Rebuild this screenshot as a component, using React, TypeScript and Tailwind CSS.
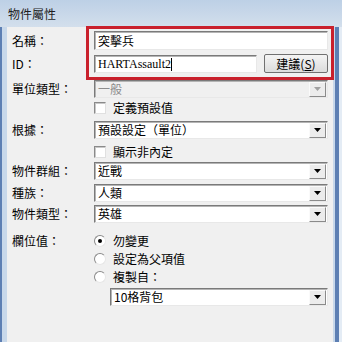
import React from "react";

const font = { fontFamily: '"Noto Sans CJK TC", "Noto Sans", sans-serif' };

function Field({ children, disabled }: { children?: React.ReactNode; disabled?: boolean }) {
  return (
    <div
      className={`flex items-center w-full h-full border border-t-[#7a7a7a] border-l-[#7a7a7a] border-b-[#e8e8e8] border-r-[#e8e8e8] shadow-[inset_1px_1px_0_#b4b4b4] pl-[3px] ${
        disabled ? "bg-[#f0f0f0] text-[#8d8d8d]" : "bg-white text-black"
      }`}
    >
      {children}
    </div>
  );
}

function Combo({ text, disabled }: { text: string; disabled?: boolean }) {
  return (
    <div
      className={`flex items-center w-full h-full border border-t-[#7a7a7a] border-l-[#7a7a7a] border-b-[#e8e8e8] border-r-[#e8e8e8] shadow-[inset_1px_1px_0_#b4b4b4] ${
        disabled ? "bg-[#f0f0f0] text-[#8d8d8d]" : "bg-white text-black"
      }`}
    >
      <span className="flex-1 pl-[3px] leading-none">{text}</span>
      <div className="w-[17px] h-[15px] mr-[1px] flex items-center justify-center bg-[#ececec] border border-t-[#fafafa] border-l-[#fafafa] border-b-[#8a8a8a] border-r-[#8a8a8a]">
        <svg width="7" height="4" viewBox="0 0 7 4">
          <path d="M0 0h7L3.5 4z" fill={disabled ? "#a0a0a0" : "#000"} />
        </svg>
      </div>
    </div>
  );
}

function Check({ label }: { label: string }) {
  return (
    <div className="flex items-center gap-[7px]">
      <div className="w-[12px] h-[12px] bg-white border border-t-[#8a8a8a] border-l-[#8a8a8a] border-b-[#e0e0e0] border-r-[#e0e0e0] shadow-[inset_1px_1px_0_#c8c8c8]" />
      <span>{label}</span>
    </div>
  );
}

function Radio({ label, on }: { label: string; on?: boolean }) {
  return (
    <div className="flex items-center gap-[7px] h-[18px]">
      <div className="w-[12px] h-[12px] rounded-full bg-white border border-t-[#8a8a8a] border-l-[#8a8a8a] border-b-[#e6e6e6] border-r-[#e6e6e6] flex items-center justify-center">
        {on && <div className="w-[4px] h-[4px] rounded-full bg-black" />}
      </div>
      <span>{label}</span>
    </div>
  );
}

function Row({ label, h, mt, children }: { label?: string; h: string; mt: string; children: React.ReactNode }) {
  return (
    <div className={`flex items-center ${h} ${mt}`}>
      <div className="w-[82px] shrink-0">{label}</div>
      <div className="flex-1 h-full flex items-center">{children}</div>
    </div>
  );
}

export default function App() {
  return (
    <div
      className="relative w-[342px] h-[342px] overflow-hidden bg-gradient-to-b from-[#c4d3e6] to-[#d6e2ef] text-[12px] text-black flex flex-col"
      style={font}
    >
      <div className="h-[27px] shrink-0 flex items-center pl-[8px] text-[#1e1e1e] bg-gradient-to-b from-[#bdd0e6] to-[#d3dfec]">
        物件屬性
      </div>
      <div className="flex-1 flex">
        <div className="w-[2px] bg-[#5d7fb3]" />
        <div className="w-[5px] bg-[#c8d8ea]" />
        <div className="flex-1 bg-[#f0f0f0] pl-[5px] pr-[5px] flex flex-col">
          <Row label="名稱：" h="h-[19px]" mt="mt-[4px]">
            <Field>突擊兵</Field>
          </Row>
          <Row label="ID：" h="h-[18px]" mt="mt-[5px]">
            <div className="flex h-full flex-1 gap-[7px]">
              <div className="flex-1 h-full" style={{ fontFamily: '"Liberation Serif", "Noto Sans CJK TC", serif' }}>
                <Field>
                  HARTAssault2<span className="inline-block w-px h-[13px] bg-black" />
                </Field>
              </div>
              <button className="w-[64px] h-[19px] -mt-px flex items-center justify-center bg-gradient-to-b from-[#f4f4f4] to-[#dcdcdc] border border-[#707070] rounded-[2px] text-[12px]">
                建議(<span className="underline">S</span>)
              </button>
            </div>
          </Row>
          <Row label="單位類型：" h="h-[18px]" mt="mt-[7px]">
            <Combo text="一般" disabled />
          </Row>
          <Row h="h-[16px]" mt="mt-[2px]">
            <Check label="定義預設值" />
          </Row>
          <Row label="根據：" h="h-[18px]" mt="mt-[5px]">
            <Combo text="預設設定（單位）" />
          </Row>
          <Row h="h-[16px]" mt="mt-[5px]">
            <Check label="顯示非內定" />
          </Row>
          <Row label="物件群組：" h="h-[18px]" mt="mt-[2px]">
            <Combo text="近戰" />
          </Row>
          <Row label="種族：" h="h-[18px]" mt="mt-[4px]">
            <Combo text="人類" />
          </Row>
          <Row label="物件類型：" h="h-[18px]" mt="mt-[3px]">
            <Combo text="英雄" />
          </Row>
          <div className="flex mt-[9px]">
            <div className="w-[82px] shrink-0 h-[18px] flex items-center">欄位值：</div>
            <div className="flex-1 flex flex-col">
              <Radio label="勿變更" on />
              <Radio label="設定為父項值" />
              <Radio label="複製自：" />
              <div className="h-[18px] ml-[16px] mt-[2px]">
                <Combo text="10格背包" />
              </div>
            </div>
          </div>
        </div>
        <div className="w-[2px] bg-[#c8d8ea]" />
        <div className="w-[4px] bg-[#5d7fb3]" />
        <div className="w-[3px] bg-[#e4ecf5]" />
      </div>
      <div className="absolute left-[86px] top-[26px] w-[248px] h-[54px] border-[3px] border-[#c9202c]" />
    </div>
  );
}
